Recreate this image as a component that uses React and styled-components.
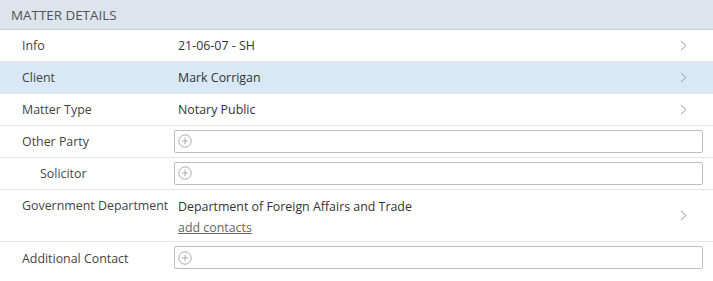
import React from 'react';
import styled, { createGlobalStyle } from 'styled-components';

const Global = createGlobalStyle`
  body {
    margin: 0;
    background: #fff;
    font-family: "Open Sans", "Noto Sans", sans-serif;
  }
`;

const Panel = styled.section`
  width: 713px;
  font-size: 12.4px;
  color: #333;
`;

const Header = styled.div`
  height: 29px;
  display: flex;
  align-items: center;
  padding-left: 11px;
  background: #dde4eb;
  border-bottom: 1px solid #c9d0d8;
  color: #505458;
  text-transform: uppercase;
  font-size: 13.4px;
`;

const Row = styled.div`
  display: flex;
  align-items: ${(p) => (p.tall ? 'flex-start' : 'center')};
  min-height: ${(p) => (p.tall ? '52px' : '32px')};
  border-bottom: 1px solid #e6e6e6;
  background: ${(p) => (p.active ? '#d9e8f6' : '#fff')};
  box-sizing: border-box;

  &:last-child {
    border-bottom: none;
  }
`;

const Label = styled.div`
  width: 174px;
  flex-shrink: 0;
  padding-left: ${(p) => (p.indent ? '40px' : '22px')};
  box-sizing: border-box;
  color: #444;
  padding-top: ${(p) => (p.tall ? '7px' : '0')};
`;

const Value = styled.div`
  flex: 1;
  padding-left: 4px;
  padding-top: ${(p) => (p.tall ? '8px' : '0')};
  display: flex;
  flex-direction: column;
  gap: 4px;
`;

const Link = styled.a`
  color: #666;
  text-decoration: underline;
  cursor: pointer;
`;

const Chevron = styled.div`
  width: 8px;
  margin-right: 25px;
  display: flex;
  align-self: center;
`;

const Input = styled.div`
  flex: 1;
  height: 23px;
  margin: 3px 10px 4px 0;
  border: 1px solid #bdbdbd;
  border-radius: 2px;
  display: flex;
  align-items: center;
  padding-left: 3px;
  box-sizing: border-box;
`;

const ChevronIcon = () => (
  <svg width="7" height="11" viewBox="0 0 7 11">
    <path d="M1 1 L6 5.5 L1 10" fill="none" stroke="#9a9a9a" strokeWidth="1" />
  </svg>
);

const PlusIcon = () => (
  <svg width="14" height="14" viewBox="0 0 14 14">
    <circle cx="7" cy="7" r="6.2" fill="none" stroke="#aaa" strokeWidth="1" />
    <path d="M7 3.8 V10.2 M3.8 7 H10.2" stroke="#aaa" strokeWidth="1" />
  </svg>
);

const LinkRow = ({ label, value, active }) => (
  <Row active={active}>
    <Label>{label}</Label>
    <Value>{value}</Value>
    <Chevron><ChevronIcon /></Chevron>
  </Row>
);

const InputRow = ({ label, indent }) => (
  <Row>
    <Label indent={indent}>{label}</Label>
    <Input><PlusIcon /></Input>
  </Row>
);

const App = () => (
  <Panel>
    <Global />
    <Header>Matter Details</Header>
    <LinkRow label="Info" value="21-06-07 - SH" />
    <LinkRow label="Client" value="Mark Corrigan" active />
    <LinkRow label="Matter Type" value="Notary Public" />
    <InputRow label="Other Party" />
    <InputRow label="Solicitor" indent />
    <Row tall>
      <Label tall>Government Department</Label>
      <Value tall>
        <span>Department of Foreign Affairs and Trade</span>
        <Link>add contacts</Link>
      </Value>
      <Chevron><ChevronIcon /></Chevron>
    </Row>
    <InputRow label="Additional Contact" />
  </Panel>
);

export default App;
